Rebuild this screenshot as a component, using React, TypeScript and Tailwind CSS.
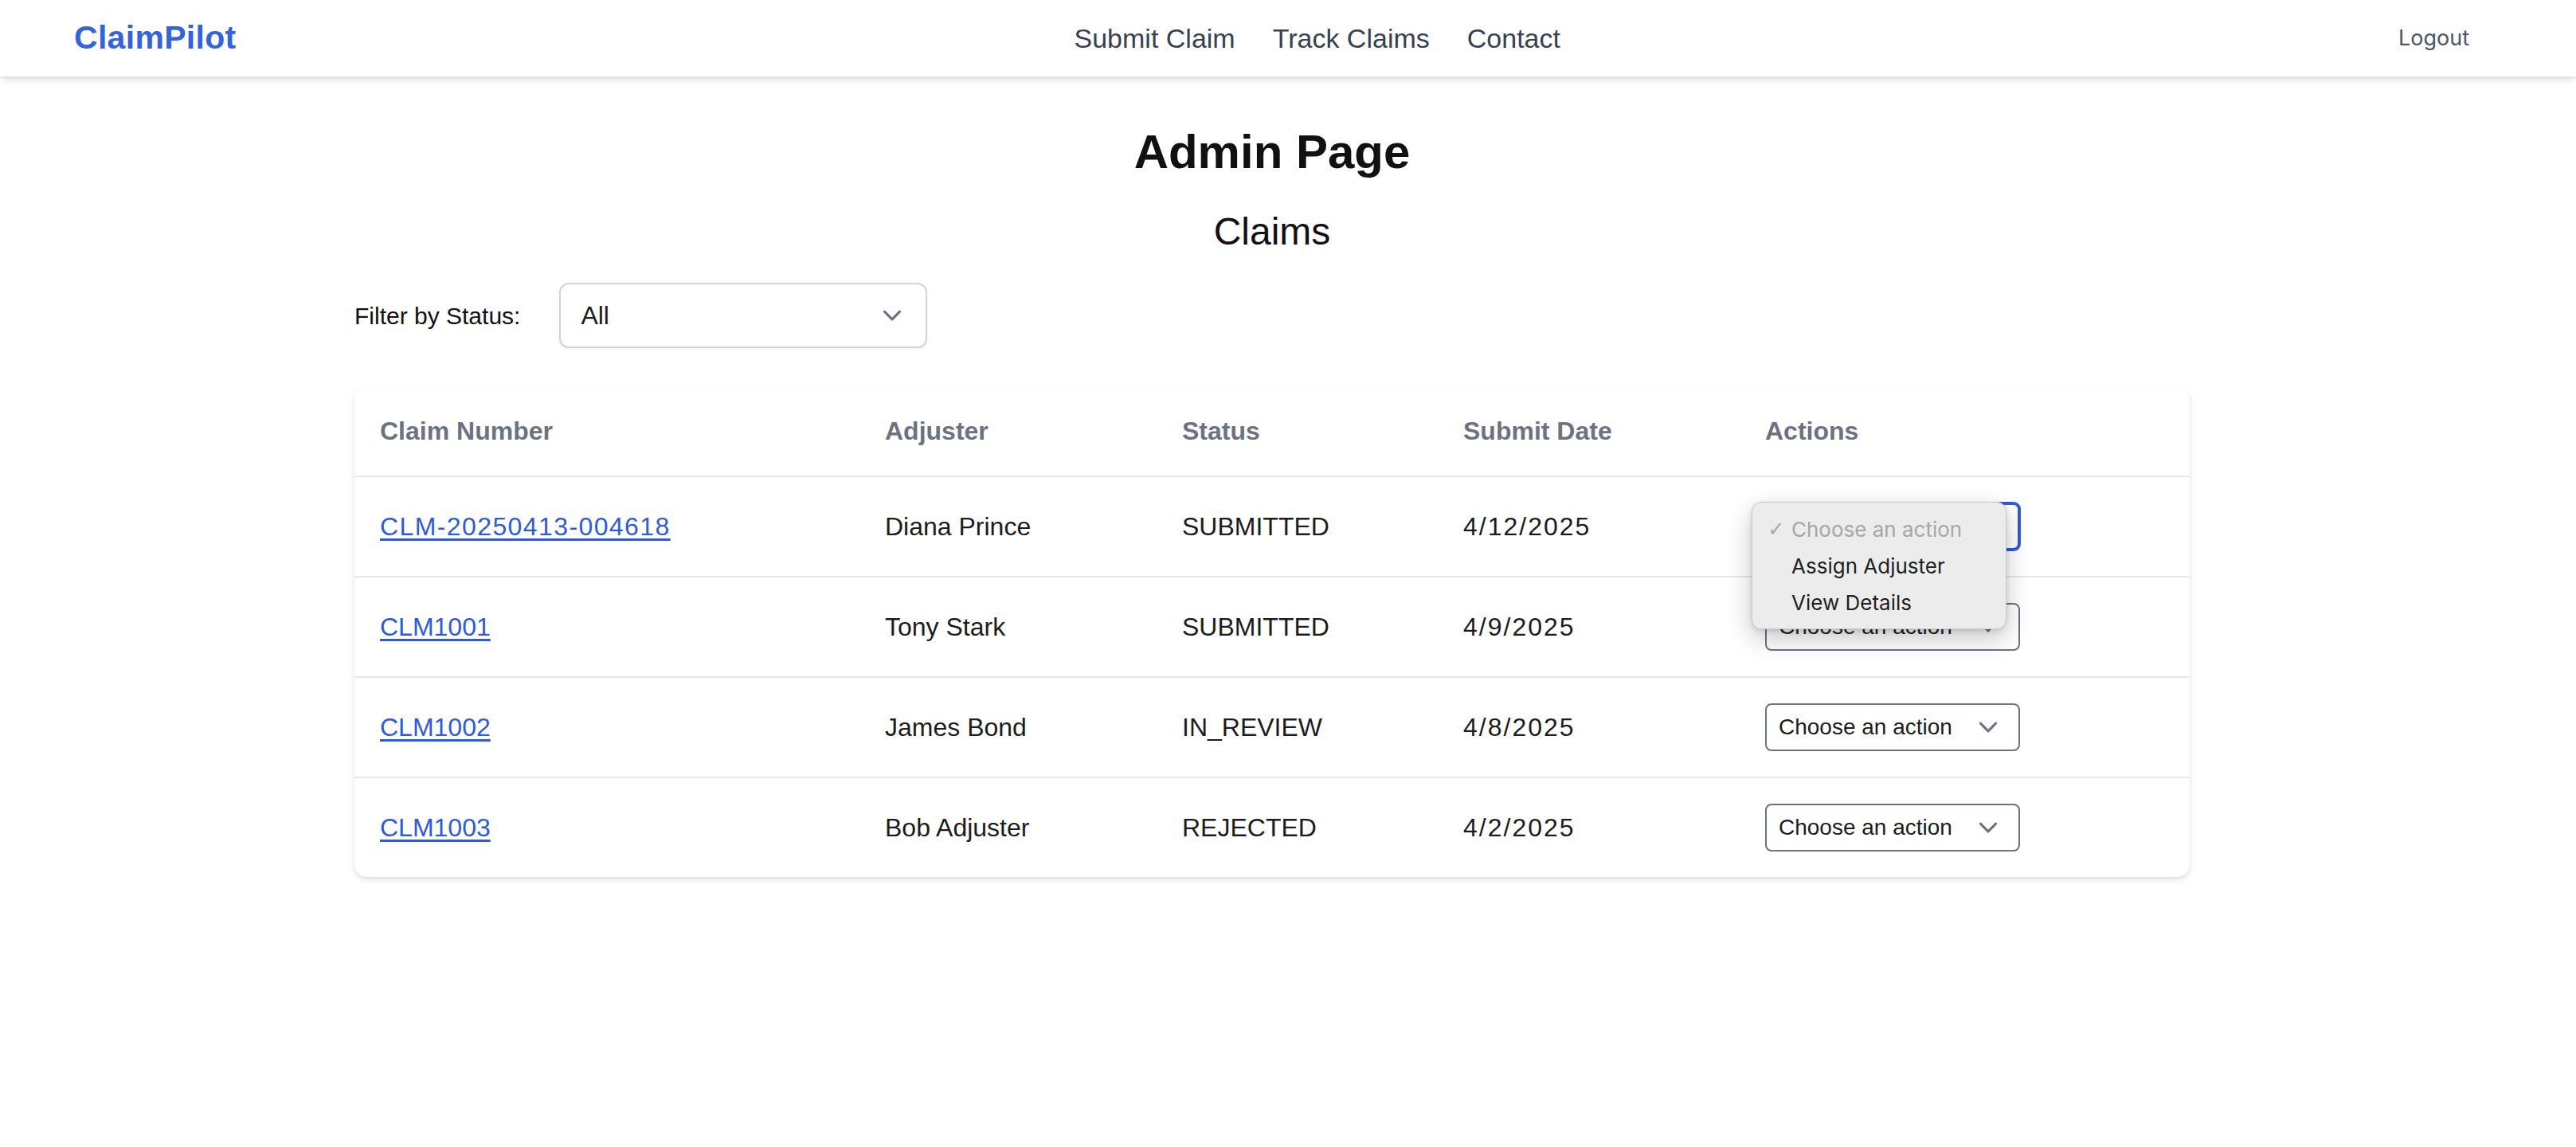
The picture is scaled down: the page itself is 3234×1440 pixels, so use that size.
import { useState } from 'react';

const CLAIMS = [
  { id: 'CLM-20250413-004618', adjuster: 'Diana Prince', status: 'SUBMITTED', date: '4/12/2025' },
  { id: 'CLM1001', adjuster: 'Tony Stark', status: 'SUBMITTED', date: '4/9/2025' },
  { id: 'CLM1002', adjuster: 'James Bond', status: 'IN_REVIEW', date: '4/8/2025' },
  { id: 'CLM1003', adjuster: 'Bob Adjuster', status: 'REJECTED', date: '4/2/2025' },
];

const ACTIONS = ['Assign Adjuster', 'View Details'];

function Chevron() {
  return (
    <svg viewBox="0 0 20 20" className="w-[48px] h-[48px] shrink-0" fill="none">
      <path d="M6 8l4 4 4-4" stroke="#6b7280" strokeWidth="1.3" strokeLinecap="round" strokeLinejoin="round" />
    </svg>
  );
}

function ActionSelect({ open }: { open: boolean }) {
  return (
    <div className="relative w-[320px]">
      <div
        className={`flex h-[60px] items-center justify-between rounded-[8px] bg-white pl-[15px] pr-[14px] text-[28px] text-[#1c1c1c] ${
          open
            ? 'border-[3px] border-[#2f5cd6] shadow-[0_0_0_1px_#2f5cd6]'
            : 'border-2 border-[#6b7280]'
        }`}
      >
        <span>Choose an action</span>
        <Chevron />
      </div>

      {open && (
        <div className="absolute left-[-17px] top-[-1px] z-10 w-[320px] rounded-[12px] border border-[#c9c9c9] bg-[#ececec] py-[10px] font-['Inter',sans-serif] text-[26px] shadow-[0_12px_32px_rgba(0,0,0,0.22),0_2px_6px_rgba(0,0,0,0.12)]">
          <div className="flex h-[46px] items-center text-[#a6a6a6]">
            <span className="w-[49px] pl-[19px] font-['DejaVu_Sans',sans-serif] text-[26px]">✓</span>
            <span>Choose an action</span>
          </div>
          {ACTIONS.map((a) => (
            <div key={a} className="flex h-[46px] items-center pl-[49px] text-[#1f1f1f]">
              {a}
            </div>
          ))}
        </div>
      )}
    </div>
  );
}

export default function App() {
  const [filter] = useState('All');

  return (
    <div className="min-h-screen bg-white font-['Liberation_Sans',Arial,sans-serif] text-[#1c1c1c]">
      <nav className="flex h-[96px] items-center justify-between bg-white pl-[93px] pr-[134px] shadow-[0_6px_10px_-2px_rgba(0,0,0,0.12),0_2px_4px_rgba(0,0,0,0.06)]">
        <div className="text-[41px] font-bold tracking-[0.3px] text-[#3563dc]">ClaimPilot</div>
        <div className="flex items-center gap-[47px] text-[34px] text-[#374151]">
          <a>Submit Claim</a>
          <a>Track Claims</a>
          <a>Contact</a>
        </div>
        <button className="font-['Inter',sans-serif] text-[27px] text-[#4b5563]">Logout</button>
      </nav>

      <main className="pr-[40px] pt-[59px] pb-[120px]">
        <div className="mx-auto w-[2304px]">
          <h1 className="text-center text-[60px] font-bold leading-[72px] text-[#111111]">Admin Page</h1>
          <h2 className="mt-[32px] text-center text-[48px] leading-[64px] text-[#111111]">Claims</h2>

          <div className="mt-[32px] flex items-center gap-[49px]">
            <label className="text-[30px] text-[#111111]">Filter by Status:</label>
            <div className="flex h-[82px] w-[462px] items-center justify-between rounded-[12px] border-2 border-[#d1d5db] bg-white pl-[25px] pr-[18px] text-[32px] shadow-[0_2px_3px_rgba(0,0,0,0.06)]">
              <span>{filter}</span>
              <Chevron />
            </div>
          </div>

          <div className="mt-[48px] rounded-[16px] bg-white shadow-[0_4px_10px_rgba(0,0,0,0.09),0_2px_4px_rgba(0,0,0,0.05)]">
            <table className="w-full table-fixed border-collapse">
              <colgroup>
                <col className="w-[634px]" />
                <col className="w-[373px]" />
                <col className="w-[353px]" />
                <col className="w-[379px]" />
                <col />
              </colgroup>
              <thead>
                <tr className="border-b-2 border-[#e5e7eb]">
                  {['Claim Number', 'Adjuster', 'Status', 'Submit Date', 'Actions'].map((h) => (
                    <th key={h} className="px-[32px] py-[32px] text-left text-[32px] font-bold leading-[48px] text-[#6b7280]">
                      {h}
                    </th>
                  ))}
                </tr>
              </thead>
              <tbody>
                {CLAIMS.map((c, i) => (
                  <tr key={c.id} className={i < CLAIMS.length - 1 ? 'border-b-2 border-[#e5e7eb]' : ''}>
                    <td className="px-[32px] py-[32px] align-middle text-[32px]">
                      <a className={`text-[#2f5bd6] underline underline-offset-[4px] ${i === 0 ? 'tracking-[1.4px]' : ''}`}>{c.id}</a>
                    </td>
                    <td className="px-[32px] py-[32px] align-middle text-[32px]">{c.adjuster}</td>
                    <td className="px-[32px] py-[32px] align-middle text-[32px]">{c.status}</td>
                    <td className="px-[32px] py-[32px] align-middle text-[32px] tracking-[2px]">{c.date}</td>
                    <td className="px-[32px] py-[32px] align-middle">
                      <ActionSelect open={i === 0} />
                    </td>
                  </tr>
                ))}
              </tbody>
            </table>
          </div>
        </div>
      </main>
    </div>
  );
}
